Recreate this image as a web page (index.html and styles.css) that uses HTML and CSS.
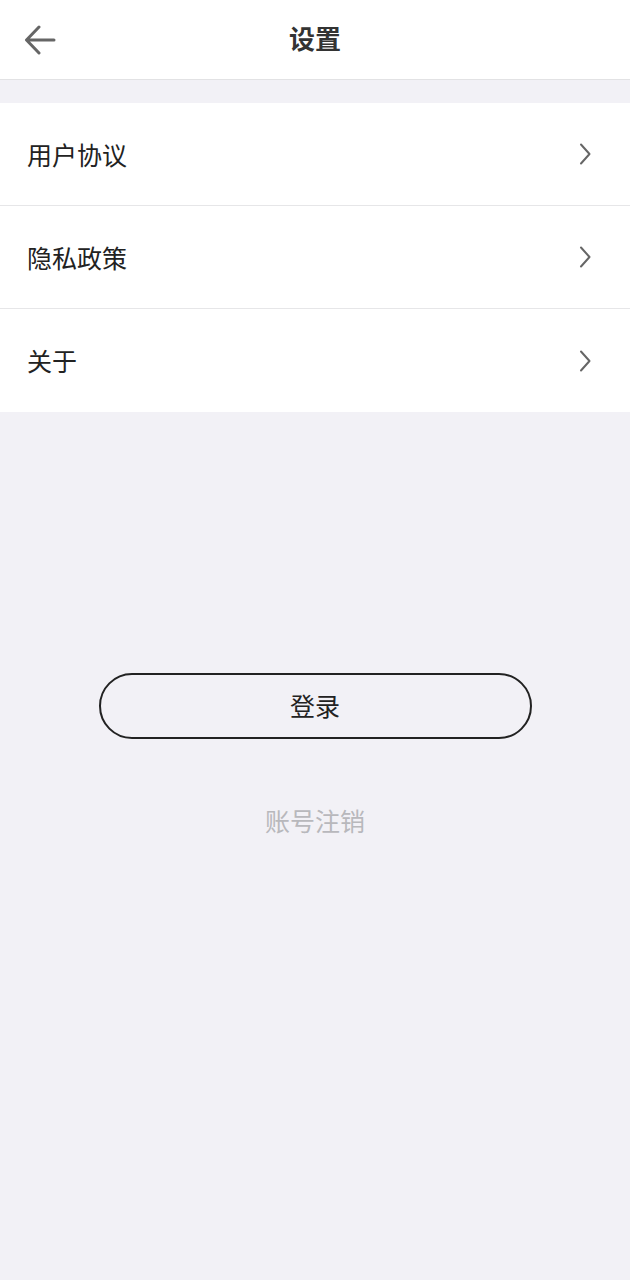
FILE: index.html
```html
<!DOCTYPE html>
<html lang="zh">
<head>
<meta charset="utf-8">
<title>设置</title>
<link rel="stylesheet" href="styles.css">
</head>
<body>
<div class="page">
  <header class="nav">
    <span class="back">
      <svg width="32" height="30" viewBox="0 0 32 30"><path d="M30 15H3M15 2L2.5 15L15 28" fill="none" stroke="#666" stroke-width="3" stroke-linecap="round" stroke-linejoin="round"/></svg>
    </span>
    <h1 class="title">设置</h1>
  </header>
  <div class="spacer"></div>
  <ul class="list">
    <li class="row"><span class="label">用户协议</span><svg class="chev" width="12" height="22" viewBox="0 0 12 22"><path d="M2 1.5L10.5 11L2 20.5" fill="none" stroke="#666" stroke-width="2" stroke-linecap="round" stroke-linejoin="round"/></svg></li>
    <li class="row"><span class="label">隐私政策</span><svg class="chev" width="12" height="22" viewBox="0 0 12 22"><path d="M2 1.5L10.5 11L2 20.5" fill="none" stroke="#666" stroke-width="2" stroke-linecap="round" stroke-linejoin="round"/></svg></li>
    <li class="row"><span class="label">关于</span><svg class="chev" width="12" height="22" viewBox="0 0 12 22"><path d="M2 1.5L10.5 11L2 20.5" fill="none" stroke="#666" stroke-width="2" stroke-linecap="round" stroke-linejoin="round"/></svg></li>
  </ul>
  <div class="actions">
    <button class="login">登录</button>
    <div class="cancel">账号注销</div>
  </div>
</div>
</body>
</html>
```

FILE: styles.css
```css
html, body {
  margin: 0;
  padding: 0;
  background: #f2f1f6;
}
body {
  font-family: "Noto Sans CJK SC", "Noto Sans", sans-serif;
  color: #222;
}
.page {
  width: 630px;
  min-height: 1280px;
  background: #f2f1f6;
}
.nav {
  height: 79px;
  background: #fff;
  border-bottom: 1px solid #e2e2e4;
  display: flex;
  align-items: center;
  justify-content: center;
  position: relative;
}
.back {
  position: absolute;
  left: 24px;
  top: 25px;
  width: 32px;
  height: 30px;
  display: flex;
}
.title {
  margin: 0;
  font-size: 26px;
  font-weight: 700;
  color: #333;
  line-height: 1;
  padding-bottom: 3px;
}
.spacer {
  height: 23px;
}
.list {
  list-style: none;
  margin: 0;
  padding: 0;
  background: #fff;
}
.row {
  height: 102px;
  display: flex;
  align-items: center;
  justify-content: space-between;
  padding: 0 39px 0 27px;
  border-bottom: 1px solid #e6e6e8;
}
.row:last-child {
  border-bottom: none;
  height: 103px;
}
.label {
  font-size: 25px;
  color: #222;
  line-height: 1;
}
.chev {
  display: block;
}
.actions {
  display: flex;
  flex-direction: column;
  align-items: center;
  padding-top: 261px;
}
.login {
  width: 433px;
  height: 66px;
  box-sizing: border-box;
  border: 2px solid #222;
  border-radius: 33px;
  background: transparent;
  font-family: "Noto Sans CJK SC", "Noto Sans", sans-serif;
  font-size: 25px;
  color: #222;
  padding: 0 0 2px;
}
.cancel {
  margin-top: 64px;
  font-size: 25px;
  color: #b8b8bc;
  line-height: 34px;
}
```
